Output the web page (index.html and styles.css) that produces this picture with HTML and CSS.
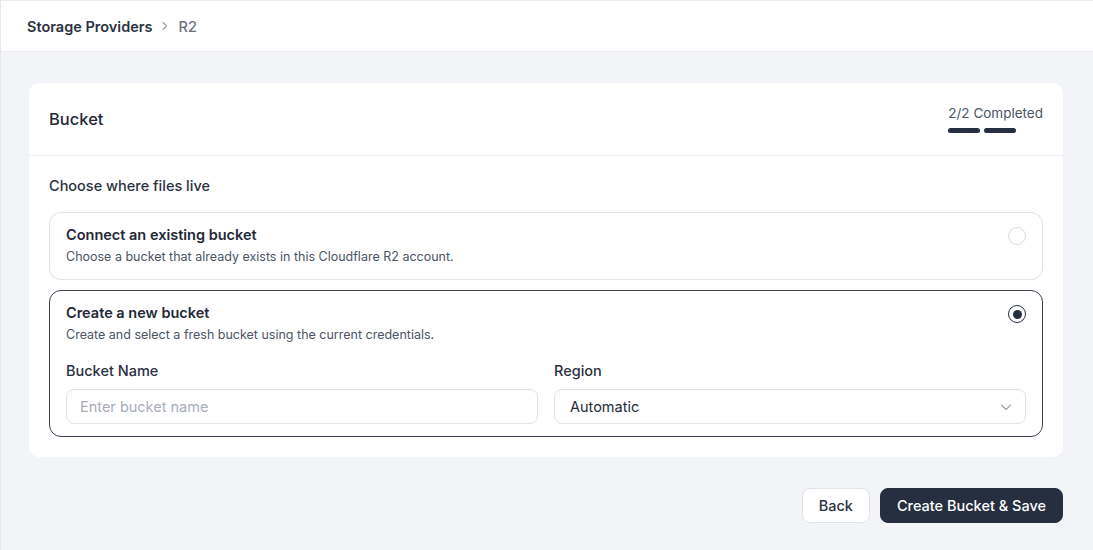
FILE: index.html
```html
<!DOCTYPE html>
<html lang="en">

<head>
    <meta charset="UTF-8">
    <meta name="viewport" content="width=device-width, initial-scale=1.0">
    <title>R2 Bucket</title>
    <link rel="stylesheet" href="styles.css">
</head>

<body>
    <header class="topbar">
        <span class="crumb">Storage Providers</span>
        <svg class="crumb-sep" width="12" height="12" viewBox="0 0 12 12">
            <path d="M4 2.5 L7.5 6 L4 9.5" fill="none" stroke="#9ca3af" stroke-width="1.2" stroke-linecap="round" stroke-linejoin="round" />
        </svg>
        <span class="crumb-current">R2</span>
    </header>

    <main class="page">
        <section class="card">
            <div class="card-header">
                <h2 class="card-title">Bucket</h2>
                <div class="steps">
                    <span class="steps-text">2/2 Completed</span>
                    <div class="steps-bars">
                        <span class="step-bar"></span>
                        <span class="step-bar"></span>
                    </div>
                </div>
            </div>

            <div class="card-body">
                <p class="section-label">Choose where files live</p>

                <div class="option">
                    <div class="option-head">
                        <div>
                            <p class="option-title">Connect an existing bucket</p>
                            <p class="option-desc">Choose a bucket that already exists in this Cloudflare R2 account.</p>
                        </div>
                        <span class="radio"></span>
                    </div>
                </div>

                <div class="option selected">
                    <div class="option-head">
                        <div>
                            <p class="option-title">Create a new bucket</p>
                            <p class="option-desc">Create and select a fresh bucket using the current credentials.</p>
                        </div>
                        <span class="radio checked"></span>
                    </div>
                    <div class="fields">
                        <div class="field">
                            <label class="field-label">Bucket Name</label>
                            <input class="input" type="text" placeholder="Enter bucket name">
                        </div>
                        <div class="field">
                            <label class="field-label">Region</label>
                            <div class="select">
                                <span>Automatic</span>
                                <svg width="14" height="14" viewBox="0 0 14 14">
                                    <path d="M2.5 5 L7 9.5 L11.5 5" fill="none" stroke="#9ca3af" stroke-width="1.1" stroke-linecap="round" stroke-linejoin="round" />
                                </svg>
                            </div>
                        </div>
                    </div>
                </div>
            </div>
        </section>

        <div class="actions">
            <button class="btn btn-light">Back</button>
            <button class="btn btn-dark">Create Bucket &amp; Save</button>
        </div>
    </main>
</body>

</html>
```

FILE: styles.css
```css
* {
    box-sizing: border-box;
}

body {
    margin: 0;
    font-family: 'Inter', 'Noto Sans', sans-serif;
    color: #1f2937;
    background-color: #f3f4f8;
    height: 550px;
    border-left: 1px solid #e5e7eb;
    border-top: 1px solid #eceef2;
}

p {
    margin: 0;
}

.topbar {
    height: 51px;
    background-color: #fff;
    border-bottom: 1px solid #e8eaef;
    display: flex;
    align-items: center;
    padding-left: 26px;
    font-size: 14.5px;
}

.crumb {
    font-weight: 600;
    color: #2a3140;
}

.crumb-sep {
    margin: 0 7px 0 7px;
}

.crumb-current {
    color: #6b7280;
    font-weight: 500;
}

.page {
    padding: 31px 30px 0 28px;
}

.card {
    background-color: #fff;
    border-radius: 10px;
}

.card-header {
    height: 73px;
    border-bottom: 1px solid #eceef2;
    display: flex;
    justify-content: space-between;
    align-items: center;
    padding: 0 20px;
}

.card-title {
    margin: 0;
    font-size: 16.5px;
    font-weight: 500;
    color: #1f2937;
}

.steps {
    display: flex;
    flex-direction: column;
    gap: 6px;
    padding-bottom: 2px;
}

.steps-text {
    font-size: 13.5px;
    color: #4b5563;
    line-height: 18px;
}

.steps-bars {
    display: flex;
    gap: 4px;
}

.step-bar {
    width: 32px;
    height: 5px;
    border-radius: 3px;
    background-color: #252f3f;
}

.card-body {
    padding: 20px 20px 20px 20px;
    display: flex;
    flex-direction: column;
    gap: 10px;
}

.section-label {
    font-size: 14.5px;
    font-weight: 500;
    color: #2a3140;
    line-height: 20px;
    margin-bottom: 6px;
}

.option {
    border: 1px solid #dfe2e8;
    border-radius: 12px;
    padding: 12px 16px 12px 16px;
}

.option.selected {
    border-color: #3b4252;
}

.option-head {
    display: flex;
    justify-content: space-between;
    align-items: flex-start;
}

.option-title {
    font-size: 14.5px;
    font-weight: 600;
    color: #1f2937;
    line-height: 20px;
}

.option-desc {
    font-size: 12.5px;
    color: #4b5563;
    line-height: 20px;
    margin-top: 2px;
}

.radio {
    width: 18px;
    height: 18px;
    border-radius: 50%;
    border: 1px solid #d7dae1;
    margin-top: 2px;
    display: flex;
    align-items: center;
    justify-content: center;
}

.radio.checked {
    border: 1.5px solid #252f3f;
}

.radio.checked::after {
    content: "";
    width: 9px;
    height: 9px;
    border-radius: 50%;
    background-color: #252f3f;
}

.fields {
    display: grid;
    grid-template-columns: 1fr 1fr;
    gap: 16px;
    margin-top: 16px;
}

.field {
    display: flex;
    flex-direction: column;
    gap: 8px;
}

.field-label {
    font-size: 14.5px;
    font-weight: 500;
    color: #2a3140;
    line-height: 20px;
}

.input,
.select {
    height: 35px;
    border: 1px solid #dfe2e8;
    border-radius: 8px;
    background-color: #fff;
    font-family: inherit;
    font-size: 14.5px;
    padding: 0 13px;
}

.input::placeholder {
    color: #a7adb9;
}

.select {
    display: flex;
    justify-content: space-between;
    align-items: center;
    padding: 0 12px 0 15px;
    color: #1f2937;
}

.actions {
    display: flex;
    justify-content: flex-end;
    gap: 10px;
    margin-top: 31px;
}

.btn {
    height: 35px;
    border-radius: 8px;
    font-family: inherit;
    font-size: 14.5px;
    font-weight: 500;
    padding: 0 16px;
    cursor: pointer;
}

.btn-light {
    background-color: #fff;
    border: 1px solid #dfe2e8;
    color: #2a3140;
}

.btn-dark {
    background-color: #252f3f;
    border: 1px solid #252f3f;
    color: #fff;
}
```
